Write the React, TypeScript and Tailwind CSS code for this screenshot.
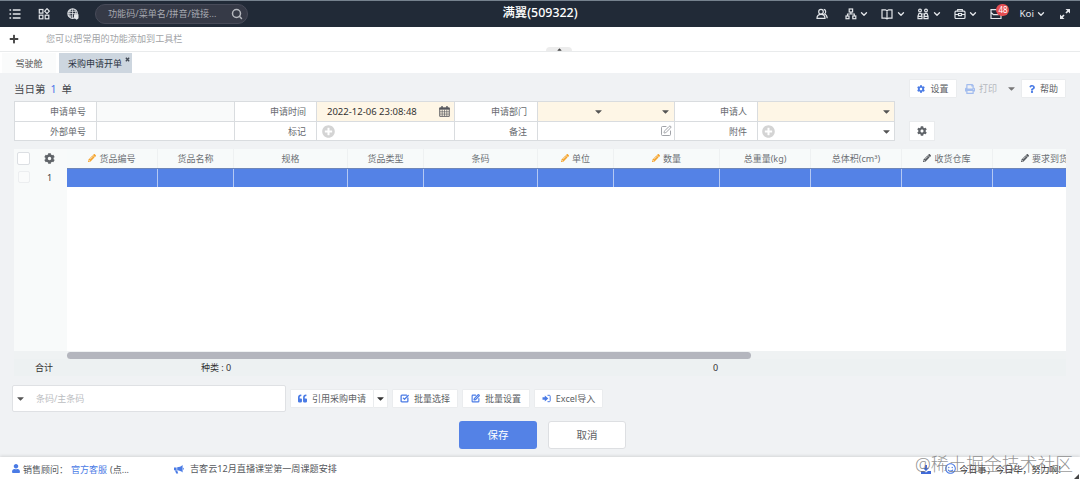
import type { ReactNode } from 'react';
import {
  FaCaretDown,
  FaCaretUp,
  FaCog,
  FaPencilAlt,
  FaPlus,
  FaPlusCircle,
  FaPrint,
  FaQuestion,
  FaQuoteLeft,
  FaUser,
  FaRegSmile,
} from 'react-icons/fa';
import { ChevronDown, Search, SquareCheckBig, SquarePen } from 'lucide-react';

const columns = [
  { title: '货品编号', width: 'w-[91px]', edit: 'orange' },
  { title: '货品名称', width: 'w-[76px]' },
  { title: '规格', width: 'w-[114px]' },
  { title: '货品类型', width: 'w-[76px]' },
  { title: '条码', width: 'w-[114px]' },
  { title: '单位', width: 'w-[76px]', edit: 'orange' },
  { title: '数量', width: 'w-[106px]', edit: 'orange' },
  { title: '总重量(kg)', width: 'w-[91px]' },
  { title: '总体积(cm³)', width: 'w-[91px]' },
  { title: '收货仓库', width: 'w-[91px]', edit: 'dark' },
  { title: '要求到货时间', width: 'w-[122px]', edit: 'dark' },
];

function NavIcon({ children, className = '' }: { children: ReactNode; className?: string }) {
  return (
    <svg
      viewBox="0 0 12 12"
      className={`h-3 w-3 shrink-0 ${className}`}
      fill="none"
      stroke="currentColor"
      strokeWidth="1.2"
    >
      {children}
    </svg>
  );
}

function TopBar() {
  return (
    <header className="relative flex h-[27px] items-center border-t border-[#76828e] bg-[#212a37] text-[#e3e6ea]">
      <NavIcon className="ml-[9px]">
        <path d="M.5 2h1.6M3.8 2h7.7M.5 6h1.6M3.8 6h7.7M.5 10h1.6M3.8 10h7.7" strokeWidth="1.4" />
      </NavIcon>
      <NavIcon className="ml-[17px]">
        <rect x="1.3" y="1.5" width="3.6" height="3.6" />
        <path d="M9 .7l2.3 2.5L9 5.7 6.7 3.2z" />
        <rect x="1.3" y="7.2" width="3.6" height="3.6" />
        <rect x="7.2" y="7.2" width="3.6" height="3.6" />
      </NavIcon>
      <NavIcon className="ml-[17px]">
        <circle cx="5.6" cy="5.6" r="4.7" />
        <path d="M1 5.6h9M5.6 1v9M3.5 1.8c-1 2-1 5.5 0 7.6M7.7 1.8c1 2 1 4 .7 5M1.8 3.3h7.6M1.8 8h4" strokeWidth=".8" />
        <path d="M7 6.2h4.5v4L9.7 11.8 7 10z" fill="currentColor" stroke="none" />
      </NavIcon>
      <div className="ml-4 flex h-5 w-[153px] items-center rounded-full border border-[#484b59] bg-[#363a47] pl-3 pr-1 text-[9.1px] text-[#a6a9b1]">
        <span className="flex-1 whitespace-nowrap">功能码/菜单名/拼音/链接...</span>
        <Search className="h-3 w-3 text-[#b5b8be]" strokeWidth={3} />
      </div>
      <div className="absolute inset-x-0 top-0 flex h-[26px] items-center justify-center pb-px text-[12.4px] font-medium text-white">
        满翼(509322)
      </div>
      <div className="ml-auto flex items-center">
        <NavIcon>
          <circle cx="5" cy="3.7" r="2.3" />
          <path d="M1 10.3c0-2.7 1.7-4 4-4s4 1.3 4 4zM7.8 1.3c2.3.4 2.5 3.6.7 4.7 1.8.6 2.6 2 2.7 4.3" />
        </NavIcon>
        <NavIcon className="ml-[17px]">
          <rect x="4.2" y="1" width="3.4" height="3" />
          <rect x="1" y="8" width="3" height="2.7" />
          <rect x="7.8" y="8" width="3" height="2.7" />
          <path d="M5.9 4v2M2.5 8V6h6.8v2" />
        </NavIcon>
        <ChevronDown className="ml-[2px] h-[10px] w-[10px]" strokeWidth={3.2} />
        <NavIcon className="ml-3">
          <path d="M1 1.8h3.4L6 2.7l1.6-.9H11v8.3H7.6L6 10.9l-1.6-.8H1zM6 2.7v8" />
        </NavIcon>
        <ChevronDown className="ml-[3px] h-[10px] w-[10px]" strokeWidth={3.2} />
        <NavIcon className="ml-[11px]">
          <circle cx="3" cy="2.5" r="1.4" />
          <circle cx="9" cy="2.5" r="1.4" />
          <path d="M1 10.7V8l1-2.7h2L5 8v2.7zM7 10.7V8l1-2.7h2L11 8v2.7zM4.3 6h3.4M1 8.3h4M7 8.3h4" />
        </NavIcon>
        <ChevronDown className="ml-[3px] h-[10px] w-[10px]" strokeWidth={3.2} />
        <NavIcon className="ml-3">
          <rect x="1" y="3.2" width="10" height="7.3" rx="1" />
          <path d="M3.7 3.2V1.5h4.6v1.7M1 6.5h3.5M7.5 6.5H11M4.5 5.5h3v2.2h-3z" />
        </NavIcon>
        <ChevronDown className="ml-[2px] h-[10px] w-[10px]" strokeWidth={3.2} />
        <div className="relative ml-3">
          <NavIcon>
            <path d="M7 1.7H1v8.8h10V5.8M1 4.5l2.5 2.2h5L11 5" />
          </NavIcon>
          <span className="absolute -top-[4px] left-[6px] flex h-[12px] w-[13px] items-center justify-center rounded-full bg-[#e64e52] text-[8px] text-white">
            48
          </span>
        </div>
        <span className="ml-[17px] text-[9.8px]">Koi</span>
        <ChevronDown className="ml-[2px] h-[10px] w-[10px]" strokeWidth={3.2} />
        <NavIcon className="ml-[13px] mr-[9px]">
          <path d="M7 5l3-3M5 7l-3 3" strokeWidth="1.7" />
          <path d="M6.5 1H11v4.5zM1 6.5V11h4.5z" fill="currentColor" stroke="none" />
        </NavIcon>
      </div>
    </header>
  );
}

function Label({ children }: { children: ReactNode }) {
  return (
    <div className="flex items-center justify-end border-b border-r border-[#d9dcdf] bg-white pr-[10px] text-[#66696e]">
      {children}
    </div>
  );
}

function Field({ children, className = 'bg-white' }: { children?: ReactNode; className?: string }) {
  return <div className={`flex items-center border-b border-r border-[#d9dcdf] ${className}`}>{children}</div>;
}

function OrderForm() {
  return (
    <div className="grid w-[881px] grid-cols-[82px_138px_82px_138px_83px_137px_83px_137px] grid-rows-[20px_19px] border-l border-t border-[#d9dcdf] text-[9px]">
      <Label>申请单号</Label>
      <Field className="bg-[#f9fafa]" />
      <Label>申请时间</Label>
      <Field className="bg-[#fef6e6] pl-[10px] pr-[4px] text-[#333]">
        <span className="flex-1 whitespace-nowrap pt-px text-[9.5px]">2022-12-06 23:08:48</span>
        <svg viewBox="0 0 12 12" className="h-[11px] w-[11px]" fill="none" stroke="#55565c">
          <path d="M.8 2h10.4v9.3H.8z" strokeWidth="1" />
          <path d="M.5 3h11" strokeWidth="2" />
          <path d="M3.3 0v3M8.7 0v3" strokeWidth="1.5" />
          <path d="M1 6.3h10M1 8.8h10M3.5 4v7M6 4v7M8.5 4v7" strokeWidth=".7" />
        </svg>
      </Field>
      <Label>申请部门</Label>
      <Field className="bg-[#fef6e6] text-[#555]">
        <FaCaretDown className="ml-[55px] h-[11px] w-[11px]" />
        <FaCaretDown className="ml-auto mr-[3px] h-[11px] w-[11px]" />
      </Field>
      <Label>申请人</Label>
      <Field className="bg-[#fef6e6] text-[#555]">
        <FaCaretDown className="ml-auto mr-[2px] h-[11px] w-[11px]" />
      </Field>

      <Label>外部单号</Label>
      <Field />
      <Label>标记</Label>
      <Field>
        <FaPlusCircle className="ml-[5px] h-[13px] w-[13px] text-[#d4d4d4]" />
      </Field>
      <Label>备注</Label>
      <Field>
        <SquarePen className="ml-auto mr-[2px] h-[12px] w-[12px] text-[#96999e]" strokeWidth={1.8} />
      </Field>
      <Label>附件</Label>
      <Field>
        <FaPlusCircle className="ml-1 h-[13px] w-[13px] text-[#d4d4d4]" />
        <FaCaretDown className="ml-auto mr-[2px] h-[11px] w-[11px] text-[#555]" />
      </Field>
    </div>
  );
}

function ItemTable() {
  return (
    <div className="ml-[14px] mt-[8px] w-[1052px] overflow-hidden text-[9px] text-[#6c7075]">
      <div className="flex h-[202px]">
        <div className="w-[53px] shrink-0 bg-[#f8fafa]">
          <div className="flex h-[19px] items-center pb-px">
            <span className="ml-[3px] h-[13px] w-[13px] rounded-[2px] border border-[#dcdfe3] bg-white" />
            <FaCog className="ml-[14px] h-[11px] w-[11px] text-[#606469]" />
          </div>
          <div className="flex h-[19px] items-center pb-px">
            <span className="ml-[4px] h-3 w-3 rounded-[2px] border border-[#eceef0] bg-[#fafbfb]" />
            <span className="ml-[17px] text-[#444]">1</span>
          </div>
        </div>
        <div className="flex min-w-0 flex-1 flex-col overflow-hidden bg-white">
          <div className="flex h-[19px] shrink-0 bg-[#f7fafa]">
            {columns.map((col) => (
              <div
                key={col.title}
                className={`flex shrink-0 items-center justify-center gap-[3px] whitespace-nowrap border-r border-[#eef1f2] pb-px ${col.width}`}
              >
                {col.edit && (
                  <FaPencilAlt
                    className={`h-2 w-2 ${col.edit === 'orange' ? 'text-[#f5a32b]' : 'text-[#55595e]'}`}
                  />
                )}
                {col.title}
              </div>
            ))}
          </div>
          <div className="flex h-[19px] shrink-0 border-t border-[#6f86b8] bg-[#5482e6]">
            {columns.map((col) => (
              <div key={col.title} className={`shrink-0 border-r border-[#b4c8f3] ${col.width}`} />
            ))}
          </div>
        </div>
      </div>
      <div className="h-[8px] bg-[#eff2f3] pl-[53px] pt-px">
        <div className="h-[7px] w-[684px] rounded-full bg-[#b4b6be]" />
      </div>
      <div className="flex h-[17px] items-center bg-[#edf1f2] pb-px text-[#333]">
        <span className="ml-[21px] w-[166px]">合计</span>
        <span className="w-[512px]">种类 : 0</span>
        <span>0</span>
      </div>
    </div>
  );
}

function ToolButton({ icon, children, className = '' }: { icon: ReactNode; children: ReactNode; className?: string }) {
  return (
    <button
      className={`flex h-[19px] items-center justify-center gap-[5px] whitespace-nowrap rounded-[1px] border border-[#eaecee] bg-white text-[9px] text-[#5b5e63] ${className}`}
    >
      {icon}
      {children}
    </button>
  );
}

export default function App() {
  return (
    <div className="flex h-[480px] w-[1080px] flex-col overflow-hidden bg-[#f0f2f4] font-['Noto_Sans','Noto_Sans_CJK_SC',sans-serif] leading-none">
      <TopBar />

      {/* Shortcut bar */}
      <div className="relative flex h-[25px] items-center border-b border-[#e9ebec] bg-white pb-px">
        <FaPlus className="ml-[9px] h-[10px] w-[10px] text-[#444]" />
        <span className="ml-[27px] text-[9.1px] text-[#a2a4a7]">您可以把常用的功能添加到工具栏</span>
        <div className="absolute bottom-0 left-[546px] flex h-[4px] w-[26px] items-center justify-center rounded-t-[4px] bg-[#ececec]">
          <FaCaretUp className="h-[7px] w-[7px] text-[#444]" />
        </div>
      </div>

      {/* Tabs */}
      <div className="flex h-[21px] items-end bg-white text-[9px]">
        <div className="ml-[2px] flex h-5 w-[54px] items-center justify-center bg-[#fafbfb] text-[#555]">驾驶舱</div>
        <div className="relative ml-[3px] flex h-5 w-[73px] items-center bg-[#cdd6df] pl-[9px] text-[#2b3442]">
          采购申请开单
          <svg viewBox="0 0 6 6" className="absolute right-[2px] top-[4px] h-[5px] w-[5px]" stroke="#444b56" strokeWidth="1.6">
            <path d="M1 1l4 4M5 1L1 5" />
          </svg>
        </div>
      </div>

      <main className="flex flex-1 flex-col">
        <div className="flex h-[28px] items-center pl-[14px] pr-[14px] pt-[3px]">
          <div className="pt-px text-[10.5px] text-[#45484d]">
            当日第<span className="mx-[5px] text-[#4a74e8]">1</span>单
          </div>
          <ToolButton className="ml-auto w-[48px]" icon={<FaCog className="h-2 w-2 text-[#4a7be5]" />}>
            设置
          </ToolButton>
          <div className="ml-[8px] flex items-center gap-[4px] text-[9px] text-[#b4b7bd]">
            <FaPrint className="h-[10px] w-[10px] text-[#a3bdee]" />
            打印
          </div>
          <FaCaretDown className="ml-[9px] h-[11px] w-[11px] text-[#777]" />
          <ToolButton className="ml-[4px] w-[45px]" icon={<FaQuestion className="h-2 w-[6px] text-[#4a7be5]" />}>
            帮助
          </ToolButton>
        </div>

        <div className="ml-[14px] flex items-end">
          <OrderForm />
          <button className="ml-[14px] flex h-5 w-[26px] items-center justify-center border border-[#e9ebed] bg-white">
            <FaCog className="h-[10px] w-[10px] text-[#606469]" />
          </button>
        </div>

        <ItemTable />

        {/* Barcode entry and batch tools */}
        <div className="ml-[12px] mt-[9px] flex items-center">
          <div className="flex h-[27px] w-[274px] items-center rounded-[2px] border border-[#dfe1e4] bg-white text-[9px] text-[#bbbdc1]">
            <FaCaretDown className="ml-[2px] h-[11px] w-[11px] text-[#555]" />
            <span className="ml-[10px]">条码/主条码</span>
          </div>
          <ToolButton className="ml-[4px] w-[84px]" icon={<FaQuoteLeft className="h-[9px] w-[9px] text-[#4a7be5]" />}>
            引用采购申请
          </ToolButton>
          <button className="flex h-[19px] w-[14px] items-center justify-center border border-l-0 border-[#eaecee] bg-white">
            <FaCaretDown className="h-[11px] w-[11px] text-[#333]" />
          </button>
          <ToolButton
            className="ml-[4px] w-[66px]"
            icon={<SquareCheckBig className="h-[9px] w-[9px] text-[#4a7be5]" strokeWidth={3.4} />}
          >
            批量选择
          </ToolButton>
          <ToolButton
            className="ml-[4px] w-[68px]"
            icon={<SquarePen className="h-[9px] w-[9px] text-[#4a7be5]" strokeWidth={3} />}
          >
            批量设置
          </ToolButton>
          <ToolButton
            className="ml-[4px] w-[69px]"
            icon={
              <svg viewBox="0 0 9 9" className="h-[9px] w-[9px]" fill="none" stroke="#4a7be5">
                <path d="M5.5 1.3h1.8c.6 0 .9.3.9.9v4.6c0 .6-.3.9-.9.9H5.5" />
                <path d="M.5 3.3h2.3V1.4L6.3 4.5 2.8 7.6V5.7H.5z" fill="#4a7be5" stroke="none" />
              </svg>
            }
          >
            Excel导入
          </ToolButton>
        </div>

        <div className="ml-[459px] mt-[9px] flex gap-[11px] text-[10.5px]">
          <button className="h-[28px] w-[78px] rounded-[3px] bg-[#5482e6] pt-px text-white">保存</button>
          <button className="h-[28px] w-[78px] rounded-[3px] border border-[#dddfe2] bg-white text-[#606266]">取消</button>
        </div>
      </main>

      <footer className="relative flex h-[23px] items-center bg-white text-[9px] text-[#55585d] shadow-[0_-1px_3px_rgba(0,0,0,0.12)]">
        <FaUser className="ml-[12px] h-[9px] w-[8px] text-[#4a7be5]" />
        <span className="ml-[3px] w-[48px] whitespace-nowrap pt-px">销售顾问：</span>
        <span className="pt-px text-[#4a7be5]">官方客服</span>
        <span className="ml-[3px] w-[64px] pt-px">(点...</span>
        <svg viewBox="0 0 10 10" className="h-[10px] w-[10px]" fill="#4a7be5">
          <path d="M0 3.4h2.6v2.8H0zM3.2 3.3C5.2 3.2 7 2.4 8.6 1v7.6C7.2 7.2 5.3 6.4 3.2 6.3zM1 6.6h2.2l1 3H2.2zM9.1 3.8c1.1.2 1.1 1.8 0 2z" />
        </svg>
        <span className="ml-[6px] pt-px text-[9.1px]">吉客云12月直播课堂第一周课题安排</span>
        <div className="ml-auto mr-[19px] flex items-center">
          <svg viewBox="0 0 10 10" className="h-[10px] w-[10px]" fill="#3f69d8">
            <path d="M4 1h2v3h2L5 7 2 4h2zM0 7h3l2 1.6L7 7h3v3H0z" />
          </svg>
          <FaRegSmile className="ml-[14px] h-[11px] w-[11px] text-[#4a7be5]" />
          <span className="ml-[4px] pt-px text-[#333]">今日事，今日毕，努力啊!</span>
        </div>
        <div className="absolute bottom-[6px] right-[7px] whitespace-nowrap text-[17.8px] font-light text-[#777]/80">
          @稀土掘金技术社区
        </div>
        <svg viewBox="0 0 5 5" className="absolute bottom-[1px] right-[1px] h-[5px] w-[5px]" fill="#444">
          <path d="M5 0v5H0z" />
        </svg>
      </footer>
    </div>
  );
}
